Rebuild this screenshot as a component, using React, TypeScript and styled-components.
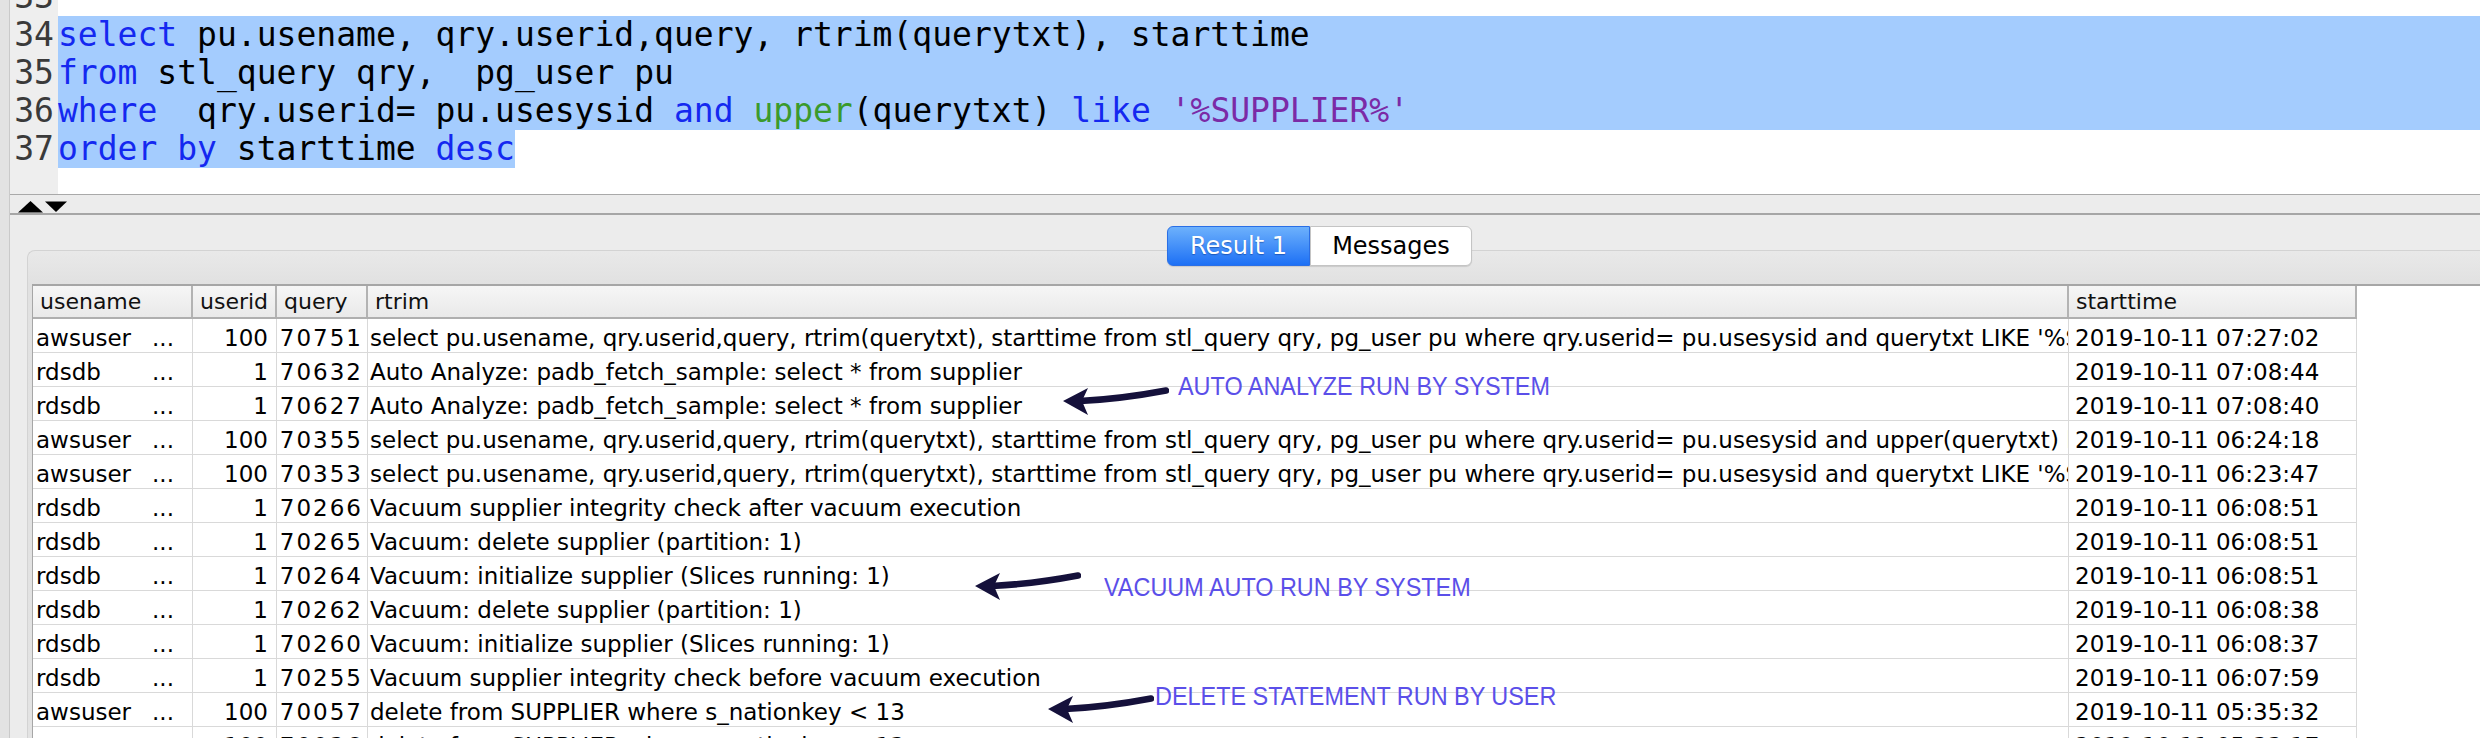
import React from 'react';
import styled, { createGlobalStyle } from 'styled-components';

const GlobalStyle = createGlobalStyle`
  html, body {
    margin: 0;
    padding: 0;
    background: #ececec;
  }
  body {
    width: 2480px;
    height: 738px;
    overflow: hidden;
  }
`;

type Row = [string, string, string, string, string];

const selectLike =
    "select pu.usename, qry.userid,query, rtrim(querytxt), starttime from stl_query qry, pg_user pu where qry.userid= pu.usesysid and querytxt LIKE '%SUPPLIER%'";
const selectUpper =
    "select pu.usename, qry.userid,query, rtrim(querytxt), starttime from stl_query qry, pg_user pu where qry.userid= pu.usesysid and upper(querytxt) like '%SUPPLIER%'";

const rows: Row[] = [
    ['awsuser', '100', '70751', selectLike, '2019-10-11 07:27:02'],
    ['rdsdb', '1', '70632', 'Auto Analyze: padb_fetch_sample: select * from supplier', '2019-10-11 07:08:44'],
    ['rdsdb', '1', '70627', 'Auto Analyze: padb_fetch_sample: select * from supplier', '2019-10-11 07:08:40'],
    ['awsuser', '100', '70355', selectUpper, '2019-10-11 06:24:18'],
    ['awsuser', '100', '70353', selectLike, '2019-10-11 06:23:47'],
    ['rdsdb', '1', '70266', 'Vacuum supplier integrity check after vacuum execution', '2019-10-11 06:08:51'],
    ['rdsdb', '1', '70265', 'Vacuum: delete supplier (partition: 1)', '2019-10-11 06:08:51'],
    ['rdsdb', '1', '70264', 'Vacuum: initialize supplier (Slices running: 1)', '2019-10-11 06:08:51'],
    ['rdsdb', '1', '70262', 'Vacuum: delete supplier (partition: 1)', '2019-10-11 06:08:38'],
    ['rdsdb', '1', '70260', 'Vacuum: initialize supplier (Slices running: 1)', '2019-10-11 06:08:37'],
    ['rdsdb', '1', '70255', 'Vacuum supplier integrity check before vacuum execution', '2019-10-11 06:07:59'],
    ['awsuser', '100', '70057', 'delete from SUPPLIER where s_nationkey < 13', '2019-10-11 05:35:32'],
    ['awsuser', '100', '70036', 'delete from SUPPLIER where s_nationkey < 13', '2019-10-11 05:33:17'],
];

const columns = '160px 84px 91px 1701px 288px';

export default function App() {
    return (
        <Window>
            <GlobalStyle />
            <EdgeStrip />
            <Main>
                {/* SQL editor */}
                <Editor>
                    <Gutter>
                        {[33, 34, 35, 36, 37].map((n) => (
                            <LineNo key={n}>{n}</LineNo>
                        ))}
                    </Gutter>
                    <Code>
                        <CodeLine />
                        <CodeLine $selected>
                            <Kw>select</Kw> pu.usename, qry.userid,query, rtrim(querytxt), starttime
                        </CodeLine>
                        <CodeLine $selected>
                            <Kw>from</Kw> stl_query qry,  pg_user pu
                        </CodeLine>
                        <CodeLine $selected>
                            <Kw>where</Kw>  qry.userid= pu.usesysid <Kw>and</Kw> <Fn>upper</Fn>(querytxt) <Kw>like</Kw>{' '}
                            <Str>'%SUPPLIER%'</Str>
                        </CodeLine>
                        <CodeLine>
                            <Selection>
                                <Kw>order</Kw> <Kw>by</Kw> starttime <Kw>desc</Kw>
                            </Selection>
                        </CodeLine>
                    </Code>
                </Editor>

                {/* splitter */}
                <Splitter>
                    <svg width="50" height="12" viewBox="0 0 50 12">
                        <polygon points="0,11.5 12.5,0 25,11.5" fill="#000" />
                        <polygon points="27,0.5 49,0.5 38,11" fill="#000" />
                    </svg>
                </Splitter>

                {/* results */}
                <ResultsArea>
                    <TabbedPane>
                        <TabStrip>
                            <Tab $active>Result 1</Tab>
                            <Tab>Messages</Tab>
                        </TabStrip>
                        <Panel>
                            <ScrollPane>
                                <HeaderRow>
                                    <HeaderCell>usename</HeaderCell>
                                    <HeaderCell>userid</HeaderCell>
                                    <HeaderCell>query</HeaderCell>
                                    <HeaderCell>rtrim</HeaderCell>
                                    <HeaderCell>starttime</HeaderCell>
                                </HeaderRow>
                                {rows.map((r, i) => (
                                    <DataRow key={i}>
                                        <NameCell>
                                            <span>{r[0]}</span>
                                            <span>...</span>
                                        </NameCell>
                                        <NumCell $pad={8}>{r[1]}</NumCell>
                                        <NumCell $pad={4} $spacing={2}>{r[2]}</NumCell>
                                        <TextCell>{r[3]}</TextCell>
                                        <TimeCell>{r[4]}</TimeCell>
                                    </DataRow>
                                ))}
                            </ScrollPane>
                        </Panel>
                    </TabbedPane>
                </ResultsArea>
            </Main>

            {/* hand-drawn annotations */}
            <Arrow $left={1063} $top={386} />
            <Note $left={1178} $top={373}>AUTO ANALYZE RUN BY SYSTEM</Note>
            <Arrow $left={975} $top={571} />
            <Note $left={1104} $top={574}>VACUUM AUTO RUN BY SYSTEM</Note>
            <Arrow $left={1048} $top={694} />
            <Note $left={1155} $top={683}>DELETE STATEMENT RUN BY USER</Note>
        </Window>
    );
}

const Arrow = ({ $left, $top }: { $left: number; $top: number }) => (
    <ArrowBox $left={$left} $top={$top} width="106" height="30" viewBox="0 0 106 30">
        <path d="M17,15 Q58,13 103,4.5" fill="none" stroke="#15113b" strokeWidth="6.5" strokeLinecap="round" />
        <polygon points="0,15 25,2 19,15 25,29" fill="#15113b" />
    </ArrowBox>
);

const Window = styled.div`
    position: relative;
    display: flex;
    width: 2480px;
    height: 738px;
    overflow: hidden;
    background: #ececec;
    font-family: "DejaVu Sans", sans-serif;
`;

const EdgeStrip = styled.div`
    flex: none;
    width: 9px;
    background: #e3e3e3;
    border-right: 1px solid #cacaca;
`;

const Main = styled.div`
    flex: 1;
    min-width: 0;
    display: flex;
    flex-direction: column;
`;

const Editor = styled.div`
    flex: none;
    height: 194px;
    display: flex;
    background: #fff;
    border-bottom: 1px solid #a9a9a9;
    overflow: hidden;
    font-family: "DejaVu Sans Mono", monospace;
    font-size: 33px;
    line-height: 38px;
`;

const Gutter = styled.div`
    flex: none;
    width: 48px;
    padding-right: 4px;
    box-sizing: border-box;
    background: #eeeeee;
    color: #3a3a3a;
    text-align: right;
    margin-top: -22px;
`;

const LineNo = styled.div`
    height: 38px;
`;

const Code = styled.div`
    flex: 1;
    margin-top: -22px;
    color: #000;
`;

const CodeLine = styled.div<{ $selected?: boolean }>`
    height: 38px;
    white-space: pre;
    background: ${(p) => (p.$selected ? '#a4ccfe' : 'transparent')};
`;

const Selection = styled.span`
    display: inline-block;
    height: 38px;
    background: #a4ccfe;
`;

const Kw = styled.span`
    color: #1428f0;
`;

const Fn = styled.span`
    color: #3a9a2c;
`;

const Str = styled.span`
    color: #7b2aa6;
`;

const Splitter = styled.div`
    flex: none;
    height: 18px;
    display: flex;
    align-items: flex-end;
    padding-left: 8px;
    border-bottom: 2px solid #a6a6a6;
    background: #ececec;
`;

const ResultsArea = styled.div`
    flex: 1;
    min-height: 0;
    overflow: hidden;
    background: #ececec;
`;

const TabbedPane = styled.div`
    width: 2585px;
    height: 100%;
    margin-left: 17px;
    display: flex;
    flex-direction: column;
`;

const TabStrip = styled.div`
    position: relative;
    z-index: 1;
    flex: none;
    height: 40px;
    margin-top: 11px;
    display: flex;
    justify-content: center;
`;

const Tab = styled.div<{ $active?: boolean }>`
    box-sizing: border-box;
    height: 40px;
    width: ${(p) => (p.$active ? '143px' : '162px')};
    display: flex;
    align-items: center;
    justify-content: center;
    font-size: 24px;
    border: 1px solid ${(p) => (p.$active ? '#2a6fe6' : '#c4c4c4')};
    border-radius: ${(p) => (p.$active ? '6px 0 0 6px' : '0 6px 6px 0')};
    background: ${(p) => (p.$active ? 'linear-gradient(#6db1fc, #1d70f5)' : '#fff')};
    color: ${(p) => (p.$active ? '#fff' : '#000')};
    text-shadow: ${(p) => (p.$active ? '0 1px 1px rgba(0,40,120,0.45)' : 'none')};
    box-shadow: 0 1px 1px rgba(0, 0, 0, 0.12);
`;

const Panel = styled.div`
    flex: 1;
    min-height: 0;
    margin-top: -16px;
    padding: 33px 0 0 4px;
    display: flex;
    flex-direction: column;
    border-top: 1px solid #d3d3d3;
    border-left: 1px solid #d3d3d3;
    border-top-left-radius: 8px;
    background: linear-gradient(#e9e9e9, #e1e1e1 33px, #e3e3e3);
`;

const ScrollPane = styled.div`
    flex: 1;
    min-height: 0;
    overflow: hidden;
    background: #fff;
    border-top: 2px solid #a6a6a6;
    border-left: 1px solid #a6a6a6;
`;

const HeaderRow = styled.div`
    display: grid;
    grid-template-columns: ${columns};
    width: max-content;
    height: 33px;
    box-sizing: border-box;
    border-bottom: 2px solid #afafaf;
    background: linear-gradient(#f6f6f6, #e9e9e9);
`;

const HeaderCell = styled.div`
    box-sizing: border-box;
    padding-left: 7px;
    border-right: 2px solid #b3b3b3;
    font-size: 22px;
    line-height: 31px;
    color: #111;
    white-space: nowrap;
    overflow: hidden;
`;

const DataRow = styled.div`
    display: grid;
    grid-template-columns: ${columns};
    width: max-content;
    height: 34px;
    box-sizing: border-box;
    border-bottom: 1px solid #d9d9d9;
    font-size: 23px;
    line-height: 33px;
    color: #000;
`;

const Cell = styled.div`
    box-sizing: border-box;
    padding-top: 3px;
    border-right: 1px solid #d9d9d9;
    white-space: nowrap;
    overflow: hidden;
`;

const NameCell = styled(Cell)`
    display: flex;
    justify-content: space-between;
    padding-left: 3px;
    padding-right: 18px;
`;

const NumCell = styled(Cell)<{ $pad: number; $spacing?: number }>`
    text-align: right;
    padding-right: ${(p) => p.$pad}px;
    letter-spacing: ${(p) => p.$spacing ?? 0}px;
`;

const TextCell = styled(Cell)`
    padding-left: 2px;
`;

const TimeCell = styled(Cell)`
    padding-left: 6px;
`;

const ArrowBox = styled.svg<{ $left: number; $top: number }>`
    position: absolute;
    left: ${(p) => p.$left}px;
    top: ${(p) => p.$top}px;
`;

const Note = styled.div<{ $left: number; $top: number }>`
    position: absolute;
    left: ${(p) => p.$left}px;
    top: ${(p) => p.$top}px;
    font-family: "Liberation Sans", Arial, sans-serif;
    font-size: 26px;
    line-height: 1;
    color: #5b4fe9;
    white-space: nowrap;
    transform: scaleX(0.9);
    transform-origin: left top;
`;
